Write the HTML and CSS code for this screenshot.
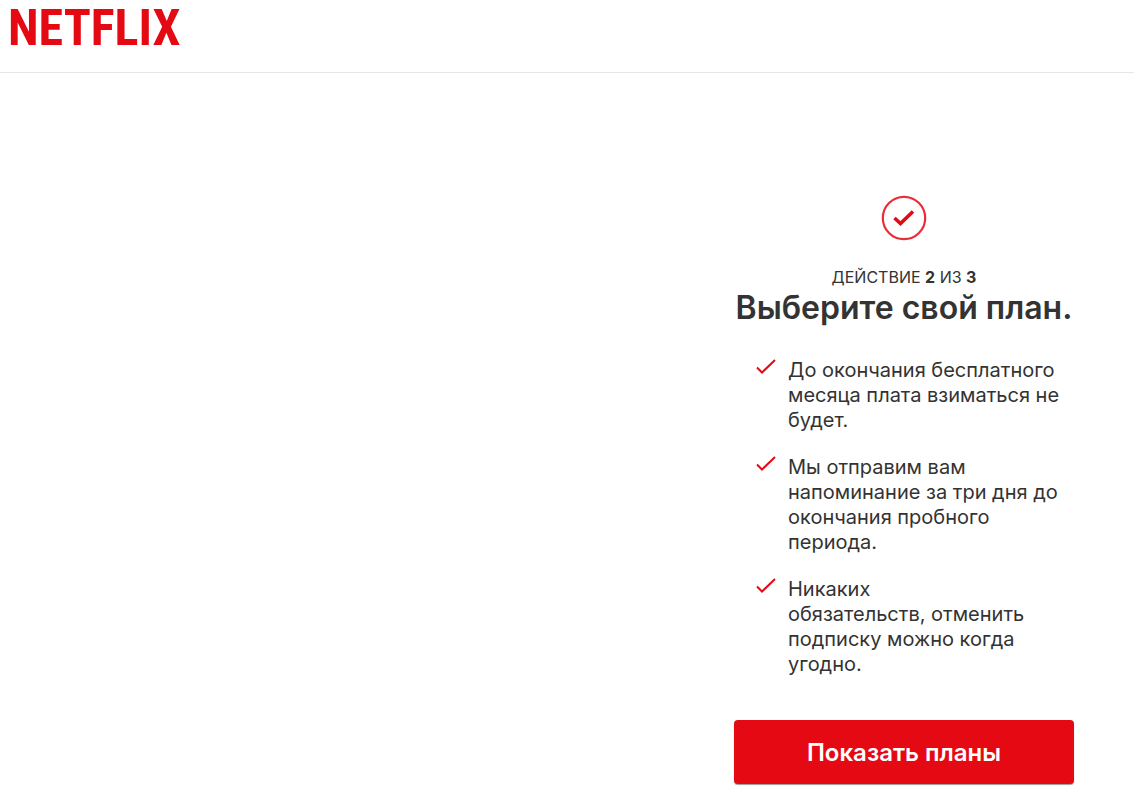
FILE: index.html
```html
<!DOCTYPE html>
<html lang="ru">

	<head>
		<meta charset="UTF-8">
		<meta name="viewport" content="width=device-width, initial-scale=1.0">
		<title>Netflix</title>
		<link rel="stylesheet" href="styles.css">
	</head>

	<body>
		<header class="header">
			<a class="logo" href="#">NETFLIX</a>
		</header>
		<main class="content">
			<section class="step">
				<svg class="step_icon" viewBox="0 0 46 46" fill="none" stroke="#e50914" aria-hidden="true">
					<circle cx="23" cy="23" r="21.2" stroke-width="2.2" stroke-opacity=".85" />
					<path d="M13.500 23L19.500 28.500L32 16.500" stroke-width="3.6" />
				</svg>
				<p class="step_num">ДЕЙСТВИЕ <b>2</b> ИЗ <b>3</b></p>
				<h1 class="title">Выберите свой план.</h1>
				<ul class="list">
					<li class="item">
						<svg class="check" viewBox="0 0 20 18" aria-hidden="true"><path d="M1 9.500L6 14.500L19 2" /></svg>
						<span>До окончания бесплатного месяца плата взиматься не будет.</span>
					</li>
					<li class="item">
						<svg class="check" viewBox="0 0 20 18" aria-hidden="true"><path d="M1 9.500L6 14.500L19 2" /></svg>
						<span>Мы отправим вам напоминание за три дня до окончания пробного периода.</span>
					</li>
					<li class="item">
						<svg class="check" viewBox="0 0 20 18" aria-hidden="true"><path d="M1 9.500L6 14.500L19 2" /></svg>
						<span>Никаких обязательств,&nbsp;отменить подписку можно когда угодно.</span>
					</li>
				</ul>
				<button class="btn" type="button">Показать планы</button>
			</section>
		</main>
	</body>

</html>
```
FILE: styles.css
```css
* {
	box-sizing: border-box;
}

body {
	margin: 0;
	background: #fff;
	color: #333;
	font-family: Inter, "Liberation Sans", sans-serif;
}

.header {
	padding: 0 8px 16px;
	border-bottom: 1px solid #e6e6e6;
}

.logo {
	display: inline-block;
	color: #e50914;
	font: bold 50px/56px "Roboto Condensed", "Liberation Sans Narrow", "DejaVu Sans Condensed", sans-serif;
	text-decoration: none;
}

.content {
	display: flex;
	justify-content: flex-end;
	padding: 122px 60px 24px 20px;
}

.step {
	width: 100%;
	max-width: 340px;
	text-align: center;
}

.step_icon {
	display: block;
	width: 46px;
	height: 46px;
	margin: 0 auto 26px;
}

.step_num {
	margin: 0;
	font-size: 16px;
	line-height: 20px;
}

.title {
	margin: 0;
	font-size: 32px;
	font-weight: 600;
	line-height: 42px;
	white-space: nowrap;
}

.list {
	display: flex;
	flex-direction: column;
	gap: 22px;
	margin: 29px 0 43px;
	padding: 0 8px 0 22px;
	list-style: none;
	text-align: left;
}

.item {
	display: flex;
	gap: 12px;
	font-size: 20px;
	line-height: 25px;
}

.check {
	flex: none;
	width: 20px;
	height: 18px;
	fill: none;
	stroke: #e50914;
	stroke-width: 2;
}

.btn {
	width: 100%;
	min-height: 64px;
	border: none;
	border-radius: 4px;
	background: #e50914;
	box-shadow: 0 1px 1px rgba(0, 0, 0, .4);
	color: #fff;
	font-family: inherit;
	font-size: 24px;
	font-weight: 600;
	cursor: pointer;
}

.btn:hover {
	background: #f6121d;
}
```
